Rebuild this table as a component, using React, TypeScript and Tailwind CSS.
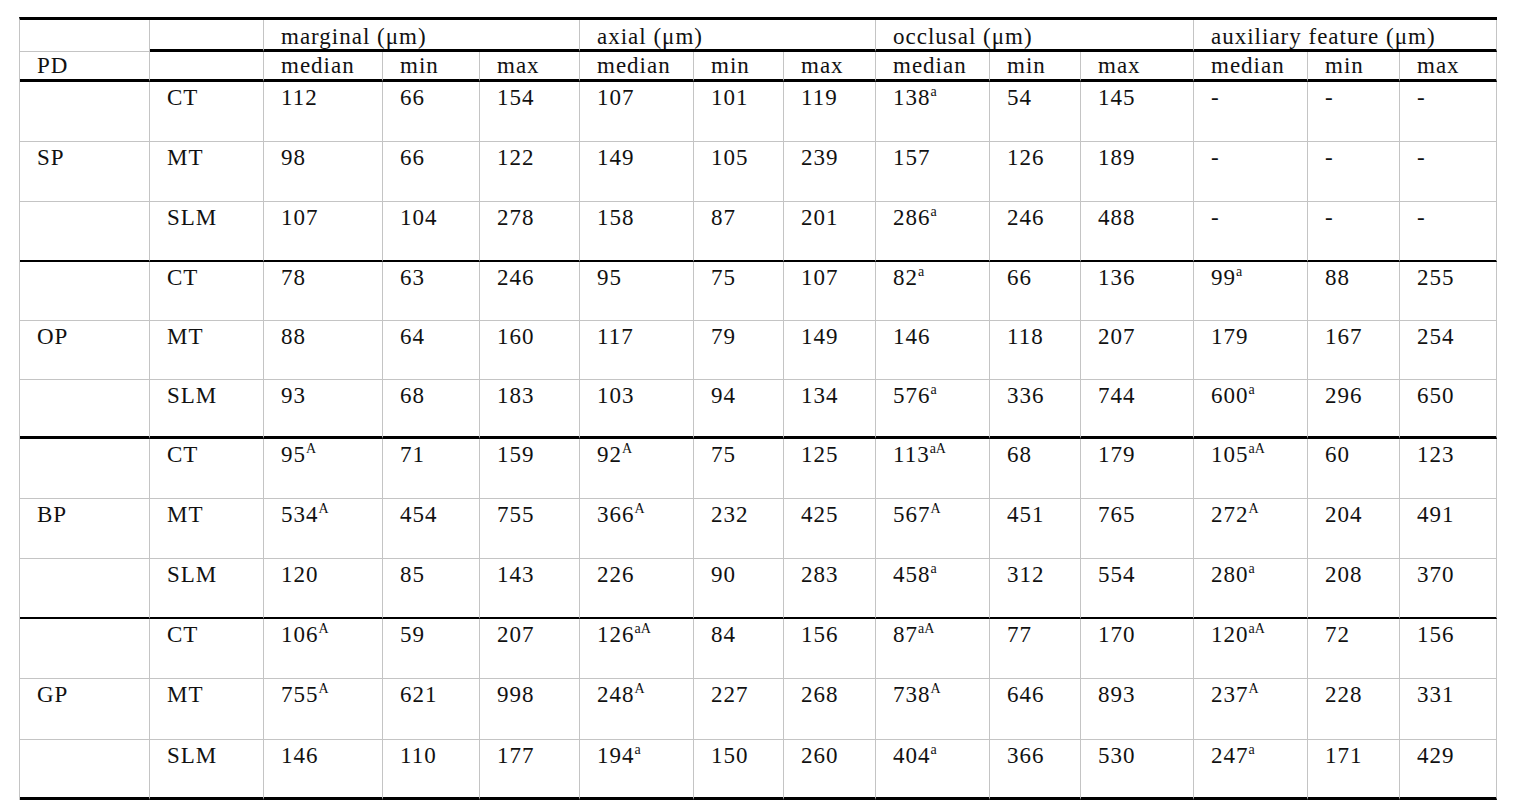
import React from 'react';

const COLS = 'grid-cols-[130px_114px_119px_97px_100px_114px_90px_92px_114px_91px_113px_114px_92px_97px]';

type Group = {
  name: string;
  heights: string[];
  last: string;
  rows: { method: string; values: string[] }[];
};

// "138|a" -> 138 with superscript a
const groups: Group[] = [
  {
    name: 'SP',
    heights: ['h-[60px]', 'h-[60px]', 'h-[60px]'],
    last: 'border-b-2 border-b-black',
    rows: [
      { method: 'CT', values: ['112', '66', '154', '107', '101', '119', '138|a', '54', '145', '-', '-', '-'] },
      { method: 'MT', values: ['98', '66', '122', '149', '105', '239', '157', '126', '189', '-', '-', '-'] },
      { method: 'SLM', values: ['107', '104', '278', '158', '87', '201', '286|a', '246', '488', '-', '-', '-'] },
    ],
  },
  {
    name: 'OP',
    heights: ['h-[59px]', 'h-[59px]', 'h-[59px]'],
    last: 'border-b-[3px] border-b-black',
    rows: [
      { method: 'CT', values: ['78', '63', '246', '95', '75', '107', '82|a', '66', '136', '99|a', '88', '255'] },
      { method: 'MT', values: ['88', '64', '160', '117', '79', '149', '146', '118', '207', '179', '167', '254'] },
      { method: 'SLM', values: ['93', '68', '183', '103', '94', '134', '576|a', '336', '744', '600|a', '296', '650'] },
    ],
  },
  {
    name: 'BP',
    heights: ['h-[60px]', 'h-[60px]', 'h-[60px]'],
    last: 'border-b-2 border-b-black',
    rows: [
      { method: 'CT', values: ['95|A', '71', '159', '92|A', '75', '125', '113|aA', '68', '179', '105|aA', '60', '123'] },
      { method: 'MT', values: ['534|A', '454', '755', '366|A', '232', '425', '567|A', '451', '765', '272|A', '204', '491'] },
      { method: 'SLM', values: ['120', '85', '143', '226', '90', '283', '458|a', '312', '554', '280|a', '208', '370'] },
    ],
  },
  {
    name: 'GP',
    heights: ['h-[60px]', 'h-[61px]', 'h-[60px]'],
    last: 'border-b-[3px] border-b-black',
    rows: [
      { method: 'CT', values: ['106|A', '59', '207', '126|aA', '84', '156', '87|aA', '77', '170', '120|aA', '72', '156'] },
      { method: 'MT', values: ['755|A', '621', '998', '248|A', '227', '268', '738|A', '646', '893', '237|A', '228', '331'] },
      { method: 'SLM', values: ['146', '110', '177', '194|a', '150', '260', '404|a', '366', '530', '247|a', '171', '429'] },
    ],
  },
];

function Value({ text }: { text: string }) {
  const [num, sup] = text.split('|');
  return (
    <>
      {num}
      {sup && <sup className="text-[14px] top-[-9px] tracking-normal">{sup}</sup>}
    </>
  );
}

const cell = 'border-r border-[#c4c4c4] pl-[17px] pt-[3px] whitespace-nowrap';

export default function App() {
  const subHeads = ['median', 'min', 'max'];
  const heads = ['marginal (μm)', 'axial (μm)', 'occlusal (μm)', 'auxiliary feature (μm)'];

  return (
    <div className="bg-white w-[1521px] h-[800px] pt-[17px] pl-[19px] text-[#111]">
      <div
        className={`grid ${COLS} w-[1478px] border-l border-l-[#c4c4c4] border-t-[3px] border-t-black text-[23px] leading-[26px] tracking-[1px]`}
        style={{ fontFamily: '"Liberation Serif", "Times New Roman", serif' }}
      >
        {/* header row 1 */}
        <div className={`${cell} h-[32px] border-b border-b-[#c4c4c4]`} />
        <div className={`${cell} h-[32px] border-b-[3px] border-b-black`} />
        {heads.map((h) => (
          <div key={h} className={`${cell} col-span-3 h-[32px] pt-[4px] border-b-[3px] border-b-black`}>
            {h}
          </div>
        ))}

        {/* header row 2 */}
        <div className={`${cell} h-[30px] pt-px border-b-[3px] border-b-black`}>PD</div>
        <div className={`${cell} h-[30px] pt-px border-b-[3px] border-b-black`} />
        {heads.map((h) =>
          subHeads.map((s) => (
            <div key={h + s} className={`${cell} h-[30px] pt-px border-b-[3px] border-b-black`}>
              {s}
            </div>
          ))
        )}

        {/* body */}
        {groups.map((g) =>
          g.rows.map((r, i) => {
            const bottom = i === 2 ? g.last : 'border-b border-b-[#c4c4c4]';
            const h = g.heights[i];
            return (
              <React.Fragment key={g.name + r.method}>
                <div className={`${cell} ${h} ${bottom}`}>{i === 1 ? g.name : ''}</div>
                <div className={`${cell} ${h} ${bottom}`}>{r.method}</div>
                {r.values.map((v, j) => (
                  <div key={j} className={`${cell} ${h} ${bottom}`}>
                    <Value text={v} />
                  </div>
                ))}
              </React.Fragment>
            );
          })
        )}
      </div>
    </div>
  );
}
